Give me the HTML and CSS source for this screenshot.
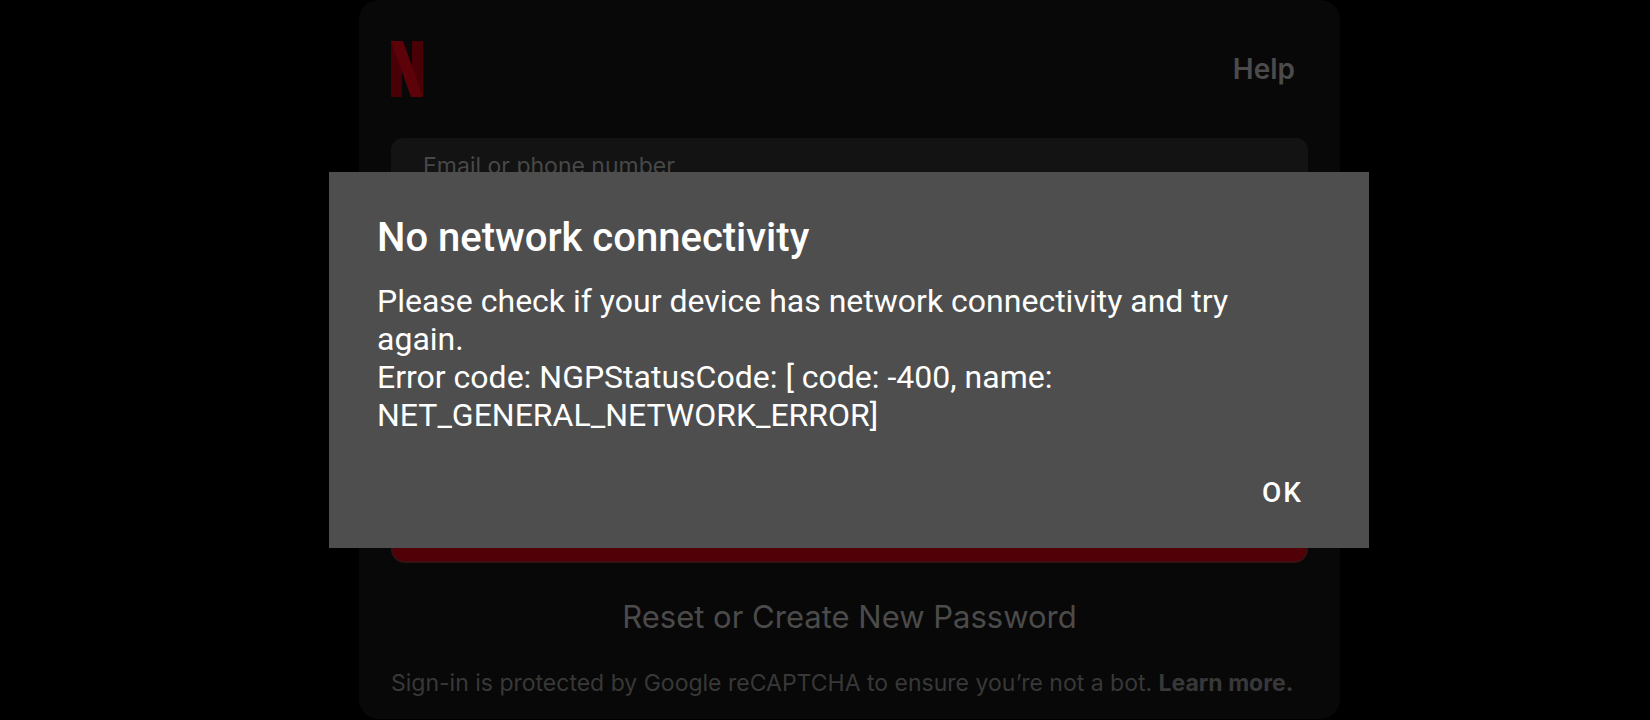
FILE: index.html
```
<!DOCTYPE html>
<html lang="en">
<head>
    <meta charset="UTF-8">
    <meta name="viewport" content="width=device-width, initial-scale=1.0">
    <title>Netflix Sign In</title>
    <link rel="stylesheet" href="styles.css">
</head>
<body>
    <main class="login-card">
        <header class="login-header">
            <svg class="logo" viewBox="0 0 32 56" role="img" aria-label="Netflix">
                <path class="logo-side" d="M0 0h11v56H0z"/>
                <path class="logo-side" d="M21 0h11v56l-11-1z"/>
                <path class="logo-diagonal" d="M0 0h12l20 56H20z"/>
            </svg>
            <a class="help-link" href="#">Help</a>
        </header>
        <form class="login-form">
            <div class="field">
                <label for="email">Email or phone number</label>
                <input type="text" id="email" name="email">
            </div>
            <div class="field">
                <input type="password" id="password" name="password" aria-label="Password">
            </div>
            <button type="button" class="sign-in-btn" aria-label="Sign In"></button>
        </form>
        <a class="reset-link" href="#">Reset or Create New Password</a>
        <p class="captcha-note">Sign-in is protected by Google reCAPTCHA to ensure you’re not a bot. <a href="#">Learn more.</a></p>
    </main>

    <!-- Error dialog -->
    <div class="overlay">
        <div class="dialog" role="alertdialog" aria-labelledby="dialogTitle" aria-describedby="dialogText">
            <h1 id="dialogTitle">No network connectivity</h1>
            <p id="dialogText">Please check if your device has network connectivity and try again.<br>Error code: NGPStatusCode: [ code: -400, name: NET_GENERAL_NETWORK_ERROR]</p>
            <div class="dialog-actions">
                <button type="button" class="ok-btn">OK</button>
            </div>
        </div>
    </div>
</body>
</html>
```

FILE: styles.css
```
* {
    box-sizing: border-box;
}
body {
    margin: 0;
    padding-left: 49px;
    background-color: #000;
    font-family: Inter, sans-serif;
}
a {
    color: inherit;
    text-decoration: none;
}
.login-card {
    display: flex;
    flex-direction: column;
    max-width: 981px;
    margin: 0 auto;
    padding: 0 32px 20px;
    border-radius: 20px;
    background-color: #080808;
}
.login-header {
    display: flex;
    justify-content: space-between;
    align-items: center;
    height: 138px;
    padding-right: 13px;
}
.logo {
    width: 32px;
    height: 56px;
}
.logo-side {
    fill: #480006;
}
.logo-diagonal {
    fill: #5e0209;
}
.help-link {
    font-size: 28px;
    font-weight: 600;
    color: #4b4b4b;
}
.login-form {
    display: flex;
    flex-direction: column;
    gap: 36px;
}
.field {
    display: flex;
    flex-direction: column;
    height: 128px;
    padding: 12px 32px;
    border-radius: 12px;
    background-color: #131313;
}
.field label {
    font-size: 23px;
    line-height: 32px;
    color: #484848;
}
.field input {
    flex: 1;
    padding: 0;
    border: none;
    outline: none;
    background: none;
    color: #4c4c4c;
    font: inherit;
    font-size: 28px;
}
.sign-in-btn {
    height: 97px;
    border: 2px solid #3a1113;
    border-radius: 14px;
    background-color: #500006;
}
.reset-link {
    margin-top: 34px;
    font-size: 31px;
    line-height: 40px;
    text-align: center;
    color: #4b4b4b;
}
.captcha-note {
    margin: 30px 0 0;
    font-size: 23px;
    line-height: 32px;
    color: #383838;
}
.captcha-note a {
    font-weight: 700;
}
.overlay {
    position: fixed;
    inset: 0;
    display: flex;
    justify-content: center;
    align-items: center;
    padding-left: 48px;
}
.dialog {
    width: 100%;
    max-width: 1040px;
    padding: 42px 48px 31px;
    background-color: #4e4e4e;
    color: #fff;
    font-family: Roboto, sans-serif;
}
.dialog h1 {
    margin: 0 0 20px;
    font-size: 40px;
    font-weight: 500;
    line-height: 48px;
}
.dialog p {
    margin: 0;
    font-size: 32px;
    line-height: 38px;
}
.dialog-actions {
    display: flex;
    justify-content: flex-end;
    margin-top: 35px;
}
.ok-btn {
    padding: 8px 18px;
    border: none;
    background: none;
    color: #fff;
    font-family: inherit;
    font-size: 28px;
    font-weight: 500;
    line-height: 32px;
    letter-spacing: 2px;
    cursor: pointer;
}
```
